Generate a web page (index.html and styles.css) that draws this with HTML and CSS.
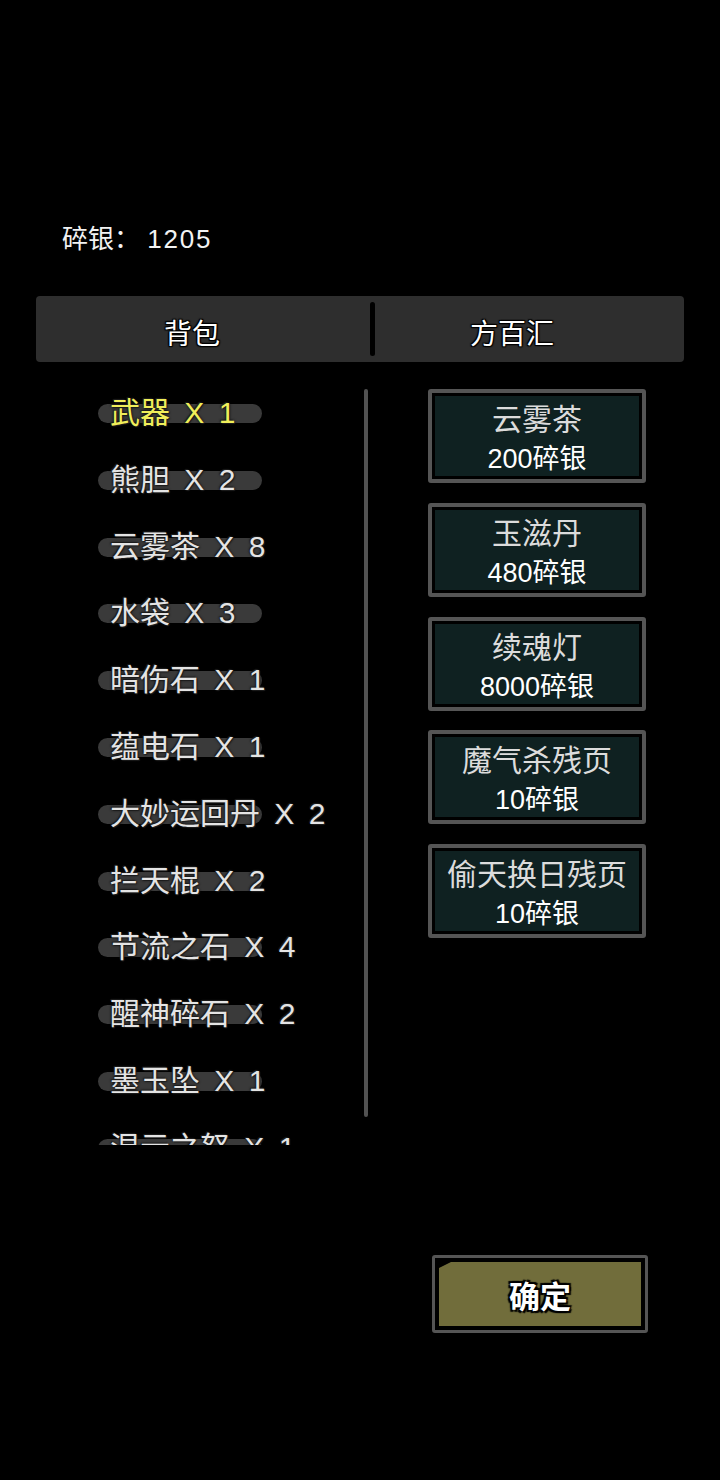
FILE: index.html
```html
<!DOCTYPE html>
<html lang="zh-CN">

<head>
    <meta charset="UTF-8">
    <meta name="viewport" content="width=device-width, initial-scale=1.0">
    <title>背包</title>
    <link rel="stylesheet" href="styles.css">
</head>

<body>
    <div class="wallet">碎银：&nbsp;<span class="wallet-num">1205</span></div>

    <div class="tabs">
        <div class="tab tab-left">背包</div>
        <div class="tab-divider"></div>
        <div class="tab tab-right">方百汇</div>
    </div>

    <div class="main">
        <!-- bag list -->
        <div class="bag">
            <ul class="bag-list">
                <li class="bag-item selected">武器 X 1</li>
                <li class="bag-item">熊胆 X 2</li>
                <li class="bag-item">云雾茶 X 8</li>
                <li class="bag-item">水袋 X 3</li>
                <li class="bag-item">暗伤石 X 1</li>
                <li class="bag-item">蕴电石 X 1</li>
                <li class="bag-item">大妙运回丹 X 2</li>
                <li class="bag-item">拦天棍 X 2</li>
                <li class="bag-item">节流之石 X 4</li>
                <li class="bag-item">醒神碎石 X 2</li>
                <li class="bag-item">墨玉坠 X 1</li>
                <li class="bag-item">混元之怒 X 1</li>
            </ul>
            <div class="scrollbar"></div>
        </div>

        <!-- shop -->
        <div class="shop">
            <div class="shop-item">
                <div class="shop-name">云雾茶</div>
                <div class="shop-price">200碎银</div>
            </div>
            <div class="shop-item">
                <div class="shop-name">玉滋丹</div>
                <div class="shop-price">480碎银</div>
            </div>
            <div class="shop-item">
                <div class="shop-name">续魂灯</div>
                <div class="shop-price">8000碎银</div>
            </div>
            <div class="shop-item">
                <div class="shop-name">魔气杀残页</div>
                <div class="shop-price">10碎银</div>
            </div>
            <div class="shop-item">
                <div class="shop-name">偷天换日残页</div>
                <div class="shop-price">10碎银</div>
            </div>
        </div>
    </div>

    <div class="footer">
        <button class="confirm"><span class="confirm-inner">确定</span></button>
    </div>
</body>

</html>
```

FILE: styles.css
```css
body {
    margin: 0;
    background: #000;
    font-family: "Liberation Sans", "Noto Sans CJK SC", sans-serif;
    color: #fff;
}

.wallet {
    padding: 223px 0 0 62px;
    height: 32px;
    font-size: 26px;
    line-height: 32px;
    color: #f2f2f2;
}

.wallet-num {
    letter-spacing: 1.8px;
}

.tabs {
    display: flex;
    align-items: center;
    height: 66px;
    margin: 41px 36px 0;
    background: #2e2e2e;
    border-radius: 4px;
}

.tab {
    box-sizing: border-box;
    padding-top: 5px;
    text-align: center;
    font-size: 28px;
    color: #fff;
    text-shadow: 0 0 2px #000, 1px 1px 1px #000, -1px -1px 1px #000, 1px -1px 1px #000, -1px 1px 1px #000;
}

.tab-left {
    width: 334px;
    padding-right: 22px;
}

.tab-right {
    flex: 1;
    padding-right: 35px;
}

.tab-divider {
    width: 5px;
    height: 54px;
    background: #000;
    border-radius: 3px;
}

.main {
    display: flex;
    height: 765px;
    margin-top: 18px;
}

.bag {
    display: flex;
    width: 270px;
    margin-left: 98px;
}

.bag-list {
    flex: 1;
    list-style: none;
    margin: 0;
    padding: 0;
    overflow: hidden;
}

.bag-item {
    position: relative;
    height: 66.8px;
    line-height: 66.8px;
    padding-left: 12px;
    font-size: 30px;
    word-spacing: 6px;
    color: #e4e4e4;
    white-space: nowrap;
    text-shadow: 0 0 3px #111, 1px 1px 1px #222, -1px -1px 1px #222;
}

.bag-item::before {
    content: "";
    position: absolute;
    left: 0;
    top: 24px;
    width: 164px;
    height: 19px;
    border-radius: 10px;
    background: #3a3a3a;
    z-index: -1;
}

.bag-item.selected {
    color: #f0ee5a;
}

.scrollbar {
    width: 4px;
    height: 728px;
    margin-top: 9px;
    background: #525252;
    border-radius: 2px;
}

.shop {
    display: flex;
    flex-direction: column;
    gap: 19.75px;
    width: 218px;
    margin: 9px 0 0 60px;
}

.shop-item {
    box-sizing: border-box;
    height: 94px;
    padding-top: 9px;
    border: 4px solid #555;
    border-radius: 3px;
    background: #0f2121;
    box-shadow: inset 0 0 0 3px #000;
    text-align: center;
}

.shop-name {
    font-size: 30px;
    line-height: 36px;
    color: #dcdcdc;
}

.shop-price {
    margin-top: 4px;
    font-size: 27px;
    line-height: 34px;
    color: #fff;
}

.footer {
    display: flex;
    justify-content: flex-end;
    padding-right: 72px;
    margin-top: 110px;
}

.confirm {
    box-sizing: border-box;
    width: 216px;
    height: 78px;
    padding: 4px;
    border: 3px solid #555;
    border-radius: 3px;
    background: #000;
    cursor: pointer;
}

.confirm-inner {
    display: flex;
    justify-content: center;
    align-items: center;
    height: 100%;
    background: #716d3b;
    clip-path: polygon(12px 0, 100% 0, 100% 100%, 0 100%, 0 6px);
    font-family: "Noto Sans CJK SC", sans-serif;
    font-size: 31px;
    font-weight: bold;
    color: #fff;
    text-shadow: 0 0 2px #000, 2px 2px 1px #000, -2px -2px 1px #000, 2px -2px 1px #000, -2px 2px 1px #000;
}
```
